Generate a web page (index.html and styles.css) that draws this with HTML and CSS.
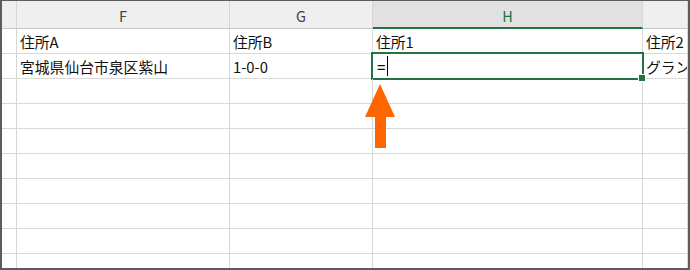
FILE: index.html
```html
<!DOCTYPE html>
<html lang="ja">
<head>
    <meta charset="UTF-8">
    <title>Sheet</title>
    <link rel="stylesheet" href="styles.css">
</head>
<body>
    <div class="sheet">
        <div class="grid">
            <!-- column headers -->
            <div class="head corner"></div>
            <div class="head">F</div>
            <div class="head">G</div>
            <div class="head active">H</div>
            <div class="head"></div>

            <!-- row 1 -->
            <div class="rowhead"></div>
            <div class="cell">住所A</div>
            <div class="cell">住所B</div>
            <div class="cell">住所1</div>
            <div class="cell">住所2</div>

            <!-- row 2 -->
            <div class="rowhead"></div>
            <div class="cell">宮城県仙台市泉区紫山</div>
            <div class="cell">1-0-0</div>
            <div class="cell selected"><span class="typed">=</span><span class="caret"></span></div>
            <div class="cell clip">グランド</div>

            <div class="rowhead"></div><div class="cell"></div><div class="cell"></div><div class="cell"></div><div class="cell"></div>
            <div class="rowhead"></div><div class="cell"></div><div class="cell"></div><div class="cell"></div><div class="cell"></div>
            <div class="rowhead"></div><div class="cell"></div><div class="cell"></div><div class="cell"></div><div class="cell"></div>
            <div class="rowhead"></div><div class="cell"></div><div class="cell"></div><div class="cell"></div><div class="cell"></div>
            <div class="rowhead"></div><div class="cell"></div><div class="cell"></div><div class="cell"></div><div class="cell"></div>
            <div class="rowhead"></div><div class="cell"></div><div class="cell"></div><div class="cell"></div><div class="cell"></div>
            <div class="rowhead"></div><div class="cell"></div><div class="cell"></div><div class="cell"></div><div class="cell"></div>
            <div class="rowhead"></div><div class="cell"></div><div class="cell"></div><div class="cell"></div><div class="cell"></div>
        </div>

        <!-- annotation arrow -->
        <svg class="arrow" width="32" height="66" viewBox="0 0 32 66">
            <polygon points="15,0 30,33 21,33 21,64 10,64 10,33 0,33" fill="#ff6600"/>
        </svg>
    </div>
</body>
</html>
```

FILE: styles.css
```css
* {
    box-sizing: border-box;
    margin: 0;
    padding: 0;
}

body {
    width: 690px;
    height: 270px;
    overflow: hidden;
    background: #fff;
    font-family: 'Noto Sans CJK JP', 'Noto Sans', sans-serif;
}

.sheet {
    position: relative;
    width: 690px;
    height: 270px;
    border-top: 1px solid #5c5c5c;
    border-left: 2px solid #5c5c5c;
    border-right: 2px solid #5c5c5c;
    border-bottom: 2px solid #5c5c5c;
    overflow: hidden;
}

.grid {
    display: grid;
    grid-template-columns: 15px 213px 143px 270px 1fr;
    grid-template-rows: 28px;
    grid-auto-rows: 25px;
}

.head {
    background-color: #efefef;
    border-right: 1px solid #d6d6d6;
    border-bottom: 1px solid #c8c8c8;
    color: #444;
    font-size: 14.5px;
    display: flex;
    align-items: center;
    justify-content: center;
    padding-top: 2px;
}

.head.active {
    background-color: #e1e1e1;
    color: #217346;
    border-bottom: 2px solid #217346;
}

.rowhead {
    border-right: 1px solid #d6d6d6;
    border-bottom: 1px solid #d6d6d6;
}

.cell {
    position: relative;
    border-right: 1px solid #d9d9d9;
    border-bottom: 1px solid #d9d9d9;
    padding-left: 3px;
    font-size: 14.8px;
    color: #111;
    display: flex;
    align-items: center;
    white-space: nowrap;
    overflow: visible;
}

.cell.clip {
    overflow: hidden;
}

.cell.selected::after {
    content: '';
    position: absolute;
    top: -2px;
    left: -2px;
    right: -2px;
    bottom: -2px;
    border: 2px solid #217346;
}

.cell.selected::before {
    content: '';
    position: absolute;
    right: -4px;
    bottom: -4px;
    width: 6px;
    height: 6px;
    background: #217346;
    border: 1px solid #fff;
    z-index: 2;
}

.typed {
    margin-left: 1px;
    font-weight: 500;
}

.caret {
    display: inline-block;
    width: 1px;
    height: 20px;
    background: #000;
    margin-left: 2px;
}

.arrow {
    position: absolute;
    left: 363px;
    top: 83px;
}
```
